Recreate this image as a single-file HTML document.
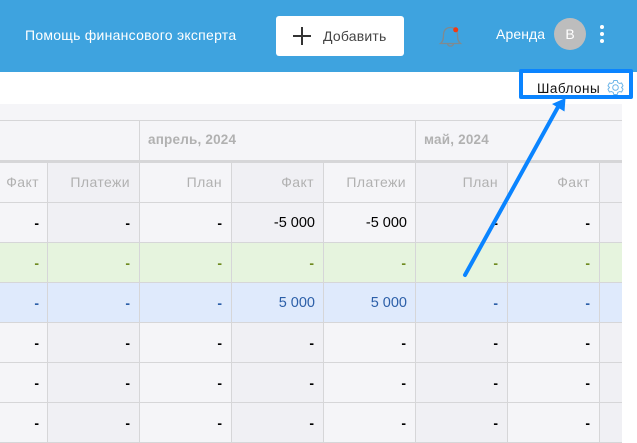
<!DOCTYPE html>
<html lang="ru"><head><meta charset="utf-8">
<style>
html,body{margin:0;padding:0;background:#fff}
body{width:637px;height:443px;overflow:hidden;position:relative;font-family:"Liberation Sans",sans-serif}
div{position:absolute;box-sizing:border-box}
.c{background:#f0f0f4;top:162px;height:281px}
.v{width:1px;background:#d6d6d8}
.h{left:0;width:622px;height:1px;background:#d6d6d8}
.t{white-space:nowrap;text-align:right;width:91px;font-size:14.5px;line-height:16px;color:#000}
.n{margin-top:1px}
.g{color:#b1b1b1;font-weight:400;font-size:14px;letter-spacing:.4px}
.m{font-weight:700;font-size:14px;margin-top:1px}
.gr{color:#6f8a1f}.bl{color:#2c5fa8}
</style></head><body>
<div style="left:0;top:0;width:637px;height:72px;background:#3ea3df"></div>
<div style="left:25px;top:27px;color:#fff;font-size:14px;line-height:17px;white-space:nowrap;letter-spacing:.26px">Помощь финансового эксперта</div>
<div style="left:276px;top:16px;width:128px;height:40px;background:#fff;border-radius:3px"></div>
<svg style="position:absolute;left:292px;top:26px" width="20" height="20"><path d="M10 1V19M1 10H19" stroke="#333" stroke-width="2"/></svg>
<div style="left:323px;top:28px;color:#444;font-size:14px;line-height:17px;white-space:nowrap;letter-spacing:.2px">Добавить</div>
<svg style="position:absolute;left:438px;top:24px" width="26" height="26" fill="none"><path d="M2.500 19.500C5 17.500 5.500 15 5.500 11C5.500 6 8.500 3.500 12.500 3.500C16.500 3.500 19.500 6 19.500 11C19.500 15 20 17.500 22.500 19.500Z M9.500 19.500C10 23 15 23 15.500 19.500" stroke="#7f8a90" stroke-width="1.300"/><circle cx="17.700" cy="5.800" r="2.500" fill="#f23a11"/></svg>
<div style="left:496px;top:26px;color:#fff;font-size:14px;line-height:17px;white-space:nowrap;letter-spacing:.1px">Аренда</div>
<div style="left:554px;top:18px;width:32px;height:32px;border-radius:50%;background:#bdbdbd;color:#fff;font-size:14px;line-height:33px;text-align:center">В</div>
<div style="left:600px;top:25px;width:4px;height:4px;border-radius:50%;background:#fff"></div>
<div style="left:600px;top:32px;width:4px;height:4px;border-radius:50%;background:#fff"></div>
<div style="left:600px;top:39px;width:4px;height:4px;border-radius:50%;background:#fff"></div>

<div style="left:0;top:104px;width:622px;height:339px;background:#f5f5f8"></div>
<div class="c" style="left:48px;width:92px"></div>
<div class="c" style="left:232px;width:92px"></div>
<div class="c" style="left:416px;width:92px"></div>
<div class="c" style="left:600px;width:22px"></div>
<div style="left:0;top:243px;width:622px;height:39px;background:#e6f4de"></div>
<div style="left:0;top:283px;width:622px;height:39px;background:#dfeafc"></div>

<div class="h" style="top:120px"></div>
<div class="h" style="top:160px;height:3px"></div>
<div class="h" style="top:202px"></div>
<div class="h" style="top:242px"></div>
<div class="h" style="top:282px"></div>
<div class="h" style="top:322px"></div>
<div class="h" style="top:362px"></div>
<div class="h" style="top:402px"></div>
<div class="h" style="top:442px"></div>
<div class="v" style="left:139px;top:120px;height:323px"></div>
<div class="v" style="left:415px;top:120px;height:323px"></div>
<div class="v" style="left:47px;top:162px;height:281px"></div>
<div class="v" style="left:231px;top:162px;height:281px"></div>
<div class="v" style="left:323px;top:162px;height:281px"></div>
<div class="v" style="left:507px;top:162px;height:281px"></div>
<div class="v" style="left:599px;top:162px;height:281px"></div>

<div class="g" style="left:148px;top:132px;font-weight:700;font-size:13.5px;line-height:16px;white-space:nowrap;letter-spacing:.2px">апрель, 2024</div>
<div class="g" style="left:424px;top:132px;font-weight:700;font-size:13.5px;line-height:16px;white-space:nowrap;letter-spacing:.2px">май, 2024</div>

<div class="t g" style="left:-52px;top:174px">Факт</div>
<div class="t g" style="left:39px;top:174px">Платежи</div>
<div class="t g" style="left:131px;top:174px">План</div>
<div class="t g" style="left:223px;top:174px">Факт</div>
<div class="t g" style="left:315px;top:174px">Платежи</div>
<div class="t g" style="left:407px;top:174px">План</div>
<div class="t g" style="left:499px;top:174px">Факт</div>

<div class="t m" style="left:-52px;top:214px">-</div><div class="t m" style="left:39px;top:214px">-</div><div class="t m" style="left:131px;top:214px">-</div>
<div class="t n" style="left:224px;top:214px">-5 000</div><div class="t n" style="left:316px;top:214px">-5 000</div>
<div class="t m" style="left:407px;top:214px">-</div><div class="t m" style="left:499px;top:214px">-</div>

<div class="t m gr" style="left:-52px;top:254px">-</div><div class="t m gr" style="left:39px;top:254px">-</div><div class="t m gr" style="left:131px;top:254px">-</div><div class="t m gr" style="left:223px;top:254px">-</div><div class="t m gr" style="left:315px;top:254px">-</div><div class="t m gr" style="left:407px;top:254px">-</div><div class="t m gr" style="left:499px;top:254px">-</div>

<div class="t m bl" style="left:-52px;top:294px">-</div><div class="t m bl" style="left:39px;top:294px">-</div><div class="t m bl" style="left:131px;top:294px">-</div>
<div class="t n bl" style="left:224px;top:294px">5 000</div><div class="t n bl" style="left:316px;top:294px">5 000</div>
<div class="t m bl" style="left:407px;top:294px">-</div><div class="t m bl" style="left:499px;top:294px">-</div>

<div class="t m" style="left:-52px;top:334px">-</div><div class="t m" style="left:39px;top:334px">-</div><div class="t m" style="left:131px;top:334px">-</div><div class="t m" style="left:223px;top:334px">-</div><div class="t m" style="left:315px;top:334px">-</div><div class="t m" style="left:407px;top:334px">-</div><div class="t m" style="left:499px;top:334px">-</div>
<div class="t m" style="left:-52px;top:374px">-</div><div class="t m" style="left:39px;top:374px">-</div><div class="t m" style="left:131px;top:374px">-</div><div class="t m" style="left:223px;top:374px">-</div><div class="t m" style="left:315px;top:374px">-</div><div class="t m" style="left:407px;top:374px">-</div><div class="t m" style="left:499px;top:374px">-</div>
<div class="t m" style="left:-52px;top:414px">-</div><div class="t m" style="left:39px;top:414px">-</div><div class="t m" style="left:131px;top:414px">-</div><div class="t m" style="left:223px;top:414px">-</div><div class="t m" style="left:315px;top:414px">-</div><div class="t m" style="left:407px;top:414px">-</div><div class="t m" style="left:499px;top:414px">-</div>

<div style="left:537px;top:80px;color:#111;font-size:13.5px;line-height:17px;white-space:nowrap;letter-spacing:.5px">Шаблоны</div>
<svg style="position:absolute;left:607px;top:79px" width="17" height="17" fill="none" stroke="#6db5e8" stroke-width="1"><path d="M6.800 1.500H10.200L10.800 3.500L12.600 4.500L14.600 4L16 6.800L14.500 8.500L16 10.200L14.600 13L12.600 12.500L10.800 13.500L10.200 15.500H6.800L6.200 13.500L4.400 12.500L2.400 13L1 10.200L2.500 8.500L1 6.800L2.400 4L4.400 4.500L6.200 3.500Z"/><circle cx="8.500" cy="8.500" r="2.800"/></svg>
<div style="left:519px;top:69px;width:114px;height:30px;border:4px solid #0a84ff;border-radius:2px"></div>
<svg style="position:absolute;left:0;top:0" width="637" height="443"><path d="M465 275L558 107" stroke="#0a84ff" stroke-width="4" stroke-linecap="round"/><path d="M565.500 98L552 104L564.500 111.500Z" fill="#0a84ff"/></svg>
</body></html>
